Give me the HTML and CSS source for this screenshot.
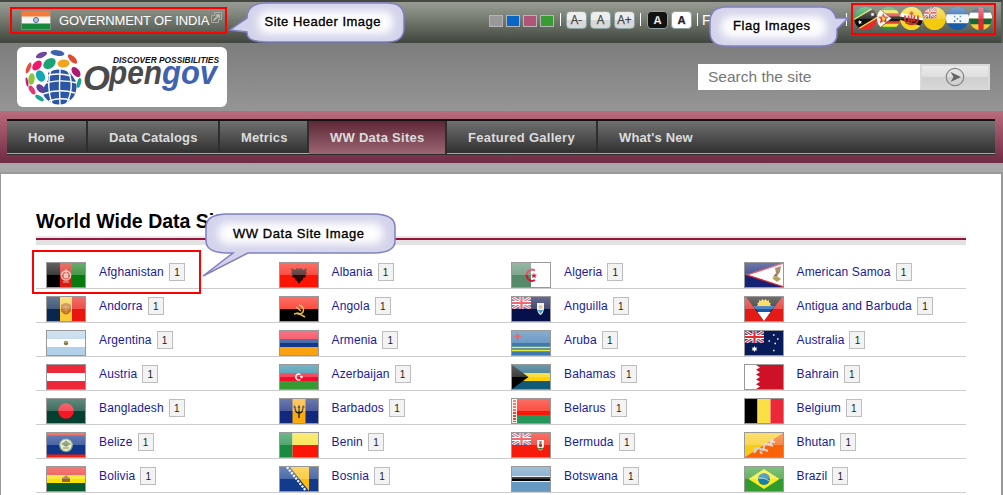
FILE: index.html
```html
<!DOCTYPE html>
<html lang="en">
<head>
<meta charset="utf-8">
<title>World Wide Data Sites</title>
<link rel="stylesheet" href="styles.css">
</head>
<body>
<svg class="defs" aria-hidden="true">
  <defs>
    <symbol id="jack" viewBox="0 0 19 12" preserveAspectRatio="none">
      <rect width="19" height="12" fill="#2c4a92"/>
      <path d="M0 0L19 12M19 0L0 12" stroke="#fff" stroke-width="3"/>
      <path d="M0 0L19 12M19 0L0 12" stroke="#e22b33" stroke-width="1.200"/>
      <path d="M9.500 0V12M0 6H19" stroke="#fff" stroke-width="4"/>
      <path d="M9.500 0V12M0 6H19" stroke="#e22b33" stroke-width="2.200"/>
    </symbol>
    <clipPath id="round"><circle cx="11" cy="11" r="11"/></clipPath>
    <filter id="soft" x="-20%" y="-40%" width="140%" height="180%"><feGaussianBlur stdDeviation="4.500"/></filter>
    <linearGradient id="disc" x1="0" y1="0" x2="0" y2="1"><stop offset="0" stop-color="#fff" stop-opacity=".45"/><stop offset=".5" stop-color="#fff" stop-opacity=".15"/><stop offset=".52" stop-color="#fff" stop-opacity="0"/></linearGradient>
  </defs>
</svg>

<div class="topbar">
  <div class="owner">
    <svg class="india" viewBox="0 0 30 20"><rect width="30" height="20" fill="#f5f5f2"/><rect width="30" height="6.500" fill="#f47b3c"/><rect y="13.500" width="30" height="6.500" fill="#16883a"/><circle cx="15" cy="10" r="2.500" fill="#b9c3e4" stroke="#4e66a8" stroke-width="1"/><rect x=".5" y=".5" width="29" height="19" fill="none" stroke="#8b8f88" stroke-width=".8"/></svg>
    <span class="owner-name">GOVERNMENT OF INDIA</span>
    <svg class="ext" viewBox="0 0 11 11"><path d="M3.500.5h7v7h-3v3h-7v-7h3z" fill="none" stroke="#a6a9a3"/><path d="M2.500 8.500L7.500 3.500M4.800 3h3.400v3.400" fill="none" stroke="#c9cbc7" stroke-width="1.100"/></svg>
  </div>
  <div class="tools">
    <i class="sw gray"></i><i class="sw blue"></i><i class="sw pink"></i><i class="sw green"></i>
    <b class="bar b1"></b>
    <span class="key">A-</span><span class="key">A</span><span class="key">A+</span>
    <b class="bar b2"></b>
    <span class="key dark">A</span><span class="key light">A</span>
    <b class="bar b3"></b>
    <span class="follow">F</span>
  </div>
  <b class="bar b4"></b>
  <div class="discs">
    <svg viewBox="0 0 22 22"><g clip-path="url(#round)"><path d="M0 0H22L0 22z" fill="#159447"/><path d="M22 0V22H0z" fill="#e52a2c"/><path d="M-4 20L26 2" stroke="#f6d94a" stroke-width="11"/><path d="M-4 20L26 2" stroke="#111" stroke-width="8.500"/><path d="M5 12.500l1 1.100 1.500-.3-.8 1.300.6 1.400-1.400-.4-1.200.9.100-1.500-1.200-.9 1.400-.3zM17 5l1 1.100 1.500-.3-.8 1.300.6 1.400-1.400-.4-1.200.9.100-1.500-1.200-.9 1.400-.3z" fill="#fff"/></g><circle cx="11" cy="11" r="11" fill="url(#disc)"/></svg>
    <svg viewBox="0 0 22 22"><g clip-path="url(#round)"><rect width="22" height="22" fill="#26963d"/><rect y="3" width="22" height="16" fill="#f6dc36"/><rect y="6" width="22" height="10" fill="#e23b30"/><rect y="9" width="22" height="4.500" fill="#191512"/><path d="M-1 -1L14 11L-1 23z" fill="#f4f4f0" stroke="#222" stroke-width=".6"/><path d="M6 5.500l1.600 3.500 3.600.3-2.600 2.500 1 3.700-3.600-1.800-3.200 1.800.8-3.600-2.600-2.600 3.500-.3z" fill="#d7382b"/><path d="M5 8.500l3 2.500-1 2.500-2-.5z" fill="#f0cf32"/></g><circle cx="11" cy="11" r="11" fill="url(#disc)"/></svg>
    <svg viewBox="0 0 22 22"><g clip-path="url(#round)"><rect width="22" height="22" fill="#f7d51e"/><path d="M-1 5L23 11V18L-1 11z" fill="#fff"/><path d="M-1 9L23 13V19L-1 12z" fill="#161310"/><path d="M5 8Q4 12 6 15Q11 18 16 15Q18 12 17 8M8 8L9 14M14 8L13 14M11 4V17M7 13H15M9 6H13" fill="none" stroke="#cf251f" stroke-width="1.700"/></g><circle cx="11" cy="11" r="11" fill="url(#disc)"/></svg>
    <svg viewBox="0 0 22 22"><g clip-path="url(#round)"><rect width="22" height="22" fill="#f3ca10"/><use href="#jack" x="0" y="0" width="13" height="11"/><circle cx="6.500" cy="5.500" r="1.100" fill="#f5d936"/></g><circle cx="11" cy="11" r="11" fill="url(#disc)"/></svg>
    <svg viewBox="0 0 22 22"><g clip-path="url(#round)"><rect width="22" height="22" fill="#1b5ca8"/><rect y="7" width="22" height="8.500" fill="#f4f7fa"/><path d="M7.500 9h1.500M13 9h1.500M10.300 11.300h1.500M7.500 13.500h1.500M13 13.500h1.500" stroke="#3f79bc" stroke-width="1.500"/></g><circle cx="11" cy="11" r="11" fill="url(#disc)"/></svg>
    <svg viewBox="0 0 22 22"><g clip-path="url(#round)"><rect width="22" height="22" fill="#f3cd32"/><rect width="22" height="5.500" fill="#123a6d"/><rect y="5.500" width="22" height="5.500" fill="#fff"/><rect y="11" width="22" height="5.500" fill="#15653a"/><rect x="9" width="5" height="22" fill="#dd2636"/></g><circle cx="11" cy="11" r="11" fill="url(#disc)"/></svg>
  </div>
</div>

<header class="masthead">
  <svg class="logo" viewBox="0 0 210 60">
    <g>
      <circle cx="42" cy="40" r="17.500" fill="#2d55a5"/>
      <path d="M24 38Q40 31 60 36M26 47Q42 41 58 46M32 54Q43 50 53 53M29 29Q40 25 54 29M34 22Q29 38 35 57M43 22Q42 39 43 58M51 24Q58 38 50 56" fill="none" stroke="#fff" stroke-width="1.400"/>
      <path d="M20 20h11v13l-9 16z" fill="#fff"/>
      <ellipse cx="24.500" cy="8" rx="6" ry="2.600" transform="rotate(-22 24.500 8)" fill="#70489b"/>
      <ellipse cx="40.500" cy="6" rx="7" ry="2.900" transform="rotate(8 40.500 6)" fill="#3f62ad"/>
      <ellipse cx="55.500" cy="12" rx="6" ry="2.700" transform="rotate(45 55.500 12)" fill="#df4a31"/>
      <ellipse cx="20" cy="18.500" rx="5.800" ry="3.800" transform="rotate(-48 20 18.500)" fill="#ee176b"/>
      <ellipse cx="32.500" cy="16.500" rx="6.800" ry="4.800" transform="rotate(-35 32.500 16.500)" fill="#1da276"/>
      <ellipse cx="46.500" cy="16.500" rx="6" ry="4" transform="rotate(-5 46.500 16.500)" fill="#efa51d"/>
      <ellipse cx="11.500" cy="21" rx="5.800" ry="2" transform="rotate(-68 11.500 21)" fill="#e94942"/>
      <ellipse cx="14.500" cy="32" rx="5.800" ry="3.200" transform="rotate(-82 14.500 32)" fill="#8bc53f"/>
      <ellipse cx="23.500" cy="29" rx="6" ry="4.200" transform="rotate(62 23.500 29)" fill="#12a9b5"/>
      <ellipse cx="59" cy="25" rx="5.800" ry="3.400" transform="rotate(50 59 25)" fill="#ad1971"/>
      <ellipse cx="62" cy="36" rx="5" ry="1.900" transform="rotate(-75 62 36)" fill="#13a58e"/>
      <ellipse cx="10" cy="35" rx="4.500" ry="1.200" transform="rotate(80 10 35)" fill="#c2197c"/>
      <ellipse cx="15" cy="43" rx="5" ry="2.500" transform="rotate(58 15 43)" fill="#e83579"/>
      <ellipse cx="23.500" cy="41.500" rx="5" ry="3.300" transform="rotate(48 23.500 41.500)" fill="#673e96"/>
      <ellipse cx="22.500" cy="51" rx="5" ry="2.100" transform="rotate(35 22.500 51)" fill="#19a693"/>
    </g>
    <text class="lg-tag" x="96" y="16" textLength="106" lengthAdjust="spacingAndGlyphs">DISCOVER POSSIBILITIES</text>
    <text class="lg-o" x="66" y="43" textLength="27" lengthAdjust="spacingAndGlyphs">O</text>
    <text class="lg-pen" x="92" y="37" textLength="53" lengthAdjust="spacingAndGlyphs">pen</text>
    <text class="lg-gov" x="145" y="37" textLength="55" lengthAdjust="spacingAndGlyphs">gov</text>
  </svg>
  <div class="search">
    <div class="field">Search the site</div>
    <div class="go"><svg viewBox="0 0 20 20"><circle cx="10" cy="10" r="8.700" fill="none" stroke="#868686" stroke-width="1.200"/><path d="M5.500 5L16 10L5.500 15L8.500 10z" fill="#666"/></svg></div>
  </div>
</header>

<nav class="nav">
  <div class="tabs">
    <a class="t1">Home</a><a class="t2">Data Catalogs</a><a class="t3">Metrics</a><a class="t4 on">WW Data Sites</a><a class="t5">Featured Gallery</a><a class="t6">What's New</a>
  </div>
</nav>

<main class="page">
  <h1>World Wide Data Sites</h1>
  <div class="rule"></div>
  <div class="sites">
    <div class="site"><span class="flag gloss"><svg viewBox="0 0 38 24"><path d="M0 0h13v24H0z" fill="#000"/><path d="M13 0h12v24H13z" fill="#d91c12"/><path d="M25 0h13v24H25z" fill="#087a10"/><circle cx="19" cy="12.500" r="4.500" fill="none" stroke="#eec1b9" stroke-width="1.600"/><path d="M17 11h4v4h-4zM16 19h6M19 6v5" fill="#eec1b9" stroke="#eec1b9"/></svg></span><a>Afghanistan</a><em>1</em></div>
    <div class="site"><span class="flag gloss"><svg viewBox="0 0 38 24"><path d="M0 0h38v24H0z" fill="#fa1505"/><path d="M11 5l4 2 2-2 2 1 2-1 2 2 4-2-1 4 1 2-2 1 1 2-3 1v2l-2 1-2 3-2-3-2-1v-2l-3-1 1-2-2-1 1-2z" fill="#2d0805"/></svg></span><a>Albania</a><em>1</em></div>
    <div class="site"><span class="flag gloss"><svg viewBox="0 0 38 24"><path d="M0 0h19v24H0z" fill="#578a6b"/><path d="M19 0h19v24H19z" fill="#fff"/><path d="M23 7.500A5.500 5.500 0 1 0 23 17" fill="none" stroke="#d71536" stroke-width="2"/><path d="M22 9.500l.8 2 2.200.1-1.600 1.400.6 2.100-2-1.200-2 1.200.6-2.100-1.600-1.400 2.200-.1z" fill="#d71536"/></svg></span><a>Algeria</a><em>1</em></div>
    <div class="site"><span class="flag gloss"><svg viewBox="0 0 38 24"><path d="M0 0h38v24H0z" fill="#142374"/><path d="M39 0L2 12L39 24z" fill="#fff" stroke="#df2734" stroke-width="1.300"/><path d="M30 5l6-2-1 6-3 4-4 1 3-4z" fill="#8b5d38"/><path d="M27 15l5-2 4 3-4 3z" fill="#b3a45a"/></svg></span><a>American Samoa</a><em>1</em></div>

    <div class="site"><span class="flag gloss"><svg viewBox="0 0 38 24"><path d="M0 0h13v24H0z" fill="#08264f"/><path d="M13 0h12v24H13z" fill="#f8cb37"/><path d="M25 0h13v24H25z" fill="#e8160e"/><path d="M14 8q5-4 10 0v6q-5 7-10 0z" fill="#bf7027"/><path d="M16 10h6M19 8v8M16 13h6" stroke="#dfa044"/></svg></span><a>Andorra</a><em>1</em></div>
    <div class="site"><span class="flag gloss"><svg viewBox="0 0 38 24"><path d="M0 0h38v12H0z" fill="#fa1505"/><path d="M0 12h38v12H0z" fill="#000"/><path d="M19 8q6 2 4 7-3 4-7 1M14 17l4-1 7 4M16 10l5 4" fill="none" stroke="#eabd36" stroke-width="1.500"/></svg></span><a>Angola</a><em>1</em></div>
    <div class="site"><span class="flag gloss"><svg viewBox="0 0 38 24"><path d="M0 0h38v24H0z" fill="#071149"/><use href="#jack" width="19" height="12"/><path d="M25 6h7v6q-1 5-3.500 6Q26 17 25 12z" fill="#f2efe5"/><path d="M25.500 13h6l-3 4z" fill="#4d9bc9"/><circle cx="28.500" cy="10" r="2" fill="#e5b366"/></svg></span><a>Anguilla</a><em>1</em></div>
    <div class="site"><span class="flag gloss"><svg viewBox="0 0 38 24"><path d="M0 0h38v24H0z" fill="#e41a17"/><path d="M1 0h36L19 24z" fill="#151515"/><path d="M8 9h22l-5 6H13z" fill="#165ba9"/><path d="M12.500 15h13L19 24z" fill="#fff"/><path d="M12 9l1-2-1-1 2-.5V3l2 1 1-2 2 1.500L21 2l1 2 2-1v2.500l2 .5-1 1 1 2z" fill="#f5d02b"/></svg></span><a>Antigua and Barbuda</a><em>1</em></div>

    <div class="site"><span class="flag gloss"><svg viewBox="0 0 38 24"><path d="M0 0h38v24H0z" fill="#b2d1e8"/><path d="M0 8h38v8H0z" fill="#fff"/><circle cx="19" cy="12" r="2.300" fill="#8b7444"/></svg></span><a>Argentina</a><em>1</em></div>
    <div class="site"><span class="flag gloss"><svg viewBox="0 0 38 24"><path d="M0 0h38v8H0z" fill="#f42037"/><path d="M0 8h38v8H0z" fill="#10398b"/><path d="M0 16h38v8H0z" fill="#fca210"/></svg></span><a>Armenia</a><em>1</em></div>
    <div class="site"><span class="flag gloss"><svg viewBox="0 0 38 24"><path d="M0 0h38v24H0z" fill="#3e7ab2"/><path d="M0 16.500h38M0 19.500h38" stroke="#e9ed37" stroke-width="1.300"/><path d="M5.500 1l1.200 3 3.300 1.300-3.300 1.200-1.200 3.500-1.200-3.500L1 5.300 4.300 4z" fill="#e0201c"/></svg></span><a>Aruba</a><em>1</em></div>
    <div class="site"><span class="flag"><svg viewBox="0 0 38 24"><path d="M0 0h38v24H0z" fill="#071b59"/><use href="#jack" width="19" height="12"/><path d="M9.500 15l.9 1.700 2-.2-1.200 1.500 1.200 1.500-2-.2-.9 1.700-.9-1.700-2 .2L7.800 18l-1.200-1.500 2 .2z" fill="#fff"/><path d="M28 4h1.500M23.500 10H25M32 8h1.500M29.500 12.500H31M28 19.500h1.500" stroke="#fff" stroke-width="1.600"/></svg></span><a>Australia</a><em>1</em></div>

    <div class="site"><span class="flag"><svg viewBox="0 0 38 24"><path d="M0 0h38v24H0z" fill="#ed2939"/><path d="M0 8h38v8H0z" fill="#fff"/></svg></span><a>Austria</a><em>1</em></div>
    <div class="site"><span class="flag gloss"><svg viewBox="0 0 38 24"><path d="M0 0h38v8H0z" fill="#2286a0"/><path d="M0 8h38v8H0z" fill="#f20d2a"/><path d="M0 16h38v8H0z" fill="#369b32"/><path d="M20.500 9.500a3 3 0 1 0 0 5" fill="none" stroke="#fff" stroke-width="1.400"/><circle cx="21.500" cy="12" r="1.300" fill="#fff"/></svg></span><a>Azerbaijan</a><em>1</em></div>
    <div class="site"><span class="flag gloss"><svg viewBox="0 0 38 24"><path d="M0 0h38v24H0z" fill="#105977"/><path d="M0 8h38v8H0z" fill="#fbd304"/><path d="M0 0L16.500 12L0 24z" fill="#000"/></svg></span><a>Bahamas</a><em>1</em></div>
    <div class="site"><span class="flag"><svg viewBox="0 0 38 24"><path d="M0 0h38v24H0z" fill="#ce1126"/><path d="M0 0h11l4 2.400-4 2.400 4 2.400-4 2.400 4 2.400-4 2.400 4 2.400-4 2.400 4 2.400-4 2.400H0z" fill="#fff"/></svg></span><a>Bahrain</a><em>1</em></div>

    <div class="site"><span class="flag gloss"><svg viewBox="0 0 38 24"><path d="M0 0h38v24H0z" fill="#03402f"/><circle cx="19" cy="12" r="7.800" fill="#f51725"/></svg></span><a>Bangladesh</a><em>1</em></div>
    <div class="site"><span class="flag gloss"><svg viewBox="0 0 38 24"><path d="M0 0h38v24H0z" fill="#11287d"/><path d="M12.500 0h13v24h-13z" fill="#fba90d"/><path d="M19 7v12M15 8q0 6 4 6t4-6" fill="none" stroke="#1d1810" stroke-width="1.300"/><path d="M17.500 9L19 5.500L20.500 9zM13.500 9l.5-3 2 2zM24.500 9L24 6l-2 2z" fill="#1d1810"/></svg></span><a>Barbados</a><em>1</em></div>
    <div class="site"><span class="flag gloss"><svg viewBox="0 0 38 24"><path d="M0 0h38v16H0z" fill="#fa1706"/><path d="M0 16h38v8H0z" fill="#26975b"/><path d="M0 0h5v24H0z" fill="#f4eee8"/><path d="M2.500 1v22" stroke="#dc4a43" stroke-width="3" stroke-dasharray="2 1"/></svg></span><a>Belarus</a><em>1</em></div>
    <div class="site"><span class="flag"><svg viewBox="0 0 38 24"><path d="M0 0h12.500v24H0z" fill="#000"/><path d="M12.500 0h13v24h-13z" fill="#fae042"/><path d="M25.500 0H38v24H25.500z" fill="#ed2939"/></svg></span><a>Belgium</a><em>1</em></div>

    <div class="site"><span class="flag gloss"><svg viewBox="0 0 38 24"><path d="M0 0h38v24H0z" fill="#f51f0d"/><path d="M0 2.500h38v19H0z" fill="#10358a"/><circle cx="19" cy="12.300" r="6.300" fill="#e9efd6" stroke="#78a275" stroke-width="1.200"/><path d="M15 11l4-3 4 3-4 2zM16 15h6" fill="#4b9457" stroke="#9c8650" stroke-width="1.200"/></svg></span><a>Belize</a><em>1</em></div>
    <div class="site"><span class="flag gloss"><svg viewBox="0 0 38 24"><path d="M0 0h12.500v24H0z" fill="#188b42"/><path d="M12.500 0H38v12H12.500z" fill="#f7df2a"/><path d="M12.500 12H38v12H12.500z" fill="#fa1705"/></svg></span><a>Benin</a><em>1</em></div>
    <div class="site"><span class="flag gloss"><svg viewBox="0 0 38 24"><path d="M0 0h38v24H0z" fill="#f61b0b"/><use href="#jack" width="19" height="12"/><path d="M25 7h7v6q-1 4-3.500 4.500Q26 17 25 13z" fill="#f5f0e7"/><path d="M28.500 8v6M27 12h3" stroke="#893326" stroke-width="2"/><path d="M25 15h7l-3.500 2z" fill="#427a40"/></svg></span><a>Bermuda</a><em>1</em></div>
    <div class="site"><span class="flag gloss"><svg viewBox="0 0 38 24"><path d="M0 0h38L0 24z" fill="#f9ca16"/><path d="M38 0v24H0z" fill="#fa6207"/><path d="M9 20l4-5 5 2 2-6 5 1 3-6M12 17l-3-1M18 16l5 2M23 11l5 2M15 18l2 3M25 8l5 1" fill="none" stroke="#d9d2cc" stroke-width="2"/></svg></span><a>Bhutan</a><em>1</em></div>

    <div class="site"><span class="flag gloss"><svg viewBox="0 0 38 24"><path d="M0 0h38v8H0z" fill="#ec2b26"/><path d="M0 8h38v8H0z" fill="#f8e300"/><path d="M0 16h38v8H0z" fill="#07592d"/><path d="M15 11l2-1 2-2 2 2 2 1v4h-8z" fill="#9b622c"/></svg></span><a>Bolivia</a><em>1</em></div>
    <div class="site"><span class="flag gloss"><svg viewBox="0 0 38 24"><path d="M0 0h38v24H0z" fill="#123b8e"/><path d="M10 0h19v24z" fill="#fcbd0b"/><path d="M7 0L26 24" stroke="#f5f8fb" stroke-width="2.300" stroke-dasharray="2.200 1.200"/></svg></span><a>Bosnia</a><em>1</em></div>
    <div class="site"><span class="flag gloss"><svg viewBox="0 0 38 24"><path d="M0 0h38v24H0z" fill="#6699c1"/><path d="M0 9h38v6H0z" fill="#e6eef5"/><path d="M0 10h38v4H0z" fill="#000"/></svg></span><a>Botswana</a><em>1</em></div>
    <div class="site"><span class="flag gloss"><svg viewBox="0 0 38 24"><path d="M0 0h38v24H0z" fill="#319b2e"/><path d="M19 2L34.500 12L19 22L3.500 12z" fill="#f7ec1c"/><circle cx="19" cy="12" r="6" fill="#1680a9"/><path d="M13.500 11q6-1 11 3" fill="none" stroke="#a9cfcd"/></svg></span><a>Brazil</a><em>1</em></div>
  </div>
</main>

<div class="mark m1"></div>
<div class="mark m2"></div>
<div class="mark m3"></div>

<svg class="callout c1" viewBox="0 0 180 46">
  <path class="bub" d="M37 3H158Q175 3 175 17V28Q175 42 158 42H37Q18 42 18 33V32L1 30L18 18Q18 3 37 3z"/>
  <rect x="29" y="11" width="135" height="23" rx="9" fill="#fff" filter="url(#soft)"/>
  <text x="35.500" y="26" textLength="116">Site Header Image</text>
</svg>
<svg class="callout c2" viewBox="0 0 145 46">
  <path class="bub" d="M17 2H113Q124 2 127 13L139 13L128 24V29Q128 41 113 41H17Q1 41 1 27V17Q1 2 17 2z"/>
  <rect x="12" y="11" width="105" height="22" rx="9" fill="#fff" filter="url(#soft)"/>
  <text x="24" y="25" textLength="77">Flag Images</text>
</svg>
<svg class="callout c3" viewBox="0 0 200 68">
  <path class="bub" d="M24 2H175Q194 3 194 15V29Q194 40 175 41H47L2 64L32 41H24Q5 40 5 29V15Q5 3 24 2z"/>
  <rect x="17" y="11" width="165" height="21" rx="9" fill="#fff" filter="url(#soft)"/>
  <text x="32" y="26" textLength="131">WW Data Site Image</text>
</svg>
</body>
</html>
```
FILE: styles.css
```css
* { box-sizing: border-box; }
html, body { margin: 0; height: 100%; overflow: hidden; }
body {
  position: relative;
  width: 1003px;
  height: 495px;
  display: flex;
  flex-direction: column;
  background: #a8a8a8;
  font-family: "Liberation Sans", Arial, sans-serif;
}
svg { display: block; }
.defs { position: absolute; width: 0; height: 0; }

.topbar {
  flex: none;
  display: flex;
  align-items: flex-start;
  height: 43px;
  padding-left: 21px;
  border-top: 2px solid #434840;
  border-right: 2px solid #5a5e57;
  background: linear-gradient(#989b94, #858a80 25%, #434840 97%);
}
.owner { display: flex; width: 468px; padding-top: 8px; }
.india { width: 30px; height: 20px; }
.owner-name { width: 151px; margin-left: 8px; font-size: 13px; line-height: 21px; letter-spacing: -.14px; color: #fff; white-space: nowrap; }
.ext { width: 11px; height: 11px; margin: 2px 0 0 1px; }
.tools { display: flex; align-items: flex-start; width: 357px; }
.sw { flex: none; width: 14px; height: 12px; margin: 13px 3px 0 0; border: 1px solid #b5b5b5; }
.gray { background: #999; }
.blue { background: #0866c6; }
.pink { background: #b05577; }
.green { background: #389c32; }
.bar { flex: none; width: 1px; height: 13px; margin-top: 11px; background: #fff; }
.b1 { margin-left: 3px; margin-right: 5px; }
.b2 { margin-left: 2px; margin-right: 6px; }
.b3 { margin-left: 2px; margin-right: 4px; }
.b4 { margin-right: 7px; }
.key {
  flex: none;
  width: 21px;
  height: 18px;
  margin: 9px 3px 0 0;
  border: 1px solid #8da3a3;
  border-radius: 4px;
  background: linear-gradient(#ededed 50%, #d8d8d8 50%);
  color: #444;
  font: 12px/16px "Open Sans", sans-serif;
  text-align: center;
  -webkit-text-stroke: .25px #444;
}
.key.dark { background: #111; color: #fff; font-weight: bold; font-size: 11px; }
.key.light { background: #fff; color: #222; font-weight: bold; font-size: 11px; }
.follow { padding-top: 10px; font-size: 14px; line-height: 16px; color: #fff; }
.discs { display: flex; padding-top: 5px; }
.discs svg { width: 23px; height: 23px; }

.masthead {
  flex: none;
  display: flex;
  justify-content: space-between;
  align-items: flex-start;
  height: 68px;
  padding: 4px 13px 0 17px;
  background: linear-gradient(#7d7d7d, #959595);
}
.logo { width: 210px; height: 60px; border-radius: 6px; background: #fff; }
.lg-tag { font: italic bold 8.500px "Liberation Sans", sans-serif; fill: #111; }
.lg-o { font: italic bold 35px "Liberation Sans", sans-serif; fill: #4a4a4d; }
.lg-pen { font: italic bold 34px "Liberation Sans", sans-serif; fill: #4a4a4d; }
.lg-gov { font: italic bold 34px "Liberation Sans", sans-serif; fill: #4063b0; }
.search { display: flex; width: 292px; height: 26px; margin-top: 17px; }
.field { width: 222px; padding-left: 10px; background: #fff; color: #777; font-size: 15.500px; line-height: 26px; }
.go {
  flex: 1;
  display: flex;
  justify-content: center;
  align-items: center;
  border: 2px solid #d9d9d9;
  background: linear-gradient(#ebebeb, #dedede 48%, #cfcfcf 50%, #d6d6d6);
}
.go svg { width: 20px; height: 20px; }

.nav { flex: none; height: 52px; padding: 8px 8px 0 7px; background: linear-gradient(#bb6d7c, #b06475 12%, #702c46 98%); }
.tabs {
  display: flex;
  height: 36px;
  border-top: 2px solid #111;
  border-bottom: 1px solid #2d2d2d;
  background: linear-gradient(#707070, #303030 32px, #aaa 32px);
}
.tabs a {
  height: 32px;
  padding-left: 21px;
  border-right: 2px solid #2e2e2e;
  color: #dcdcdc;
  font-size: 13px;
  font-weight: bold;
  line-height: 33px;
  letter-spacing: .14px;
  white-space: nowrap;
}
.t1 { width: 81px; }
.t2 { width: 132px; }
.t3 { width: 89px; }
.t4 { width: 138px; }
.t5 { width: 151px; }
.tabs .t4, .tabs .t5 { letter-spacing: .27px; }
.tabs .t6 { border-right: 0; }
.tabs .on { height: 33px; background: linear-gradient(#5e2735, #9c6674) padding-box; }

.page {
  flex: 1;
  margin-top: 9px;
  padding: 33px 35px 0;
  border: solid #999;
  border-width: 2px 2px 0 1px;
  background: #fff;
}
h1 { margin: 0; height: 29px; font-size: 19.500px; line-height: 28px; color: #000; }
.rule { height: 9px; border-top: 2px solid #e8e8e8; background: linear-gradient(#97153c 2px, #e2e2e2 2px); }
.sites { display: grid; grid-template-columns: repeat(4, 1fr); width: 930px; margin-top: 10px; }
.site { display: flex; align-items: flex-start; height: 34px; padding: 7px 0 0 10px; border-bottom: 1px solid #ccc; }
.flag { position: relative; flex: none; width: 40px; height: 26px; border: 1px solid #999; }
.flag svg { width: 38px; height: 24px; }
.gloss::after { content: ""; position: absolute; inset: 0 0 12px; background: linear-gradient(rgba(255,255,255,.38), rgba(255,255,255,.24)); }
.site a { margin-left: 13px; font-size: 12px; line-height: 20px; letter-spacing: .14px; color: #1a1a9c; white-space: nowrap; }
.site em {
  width: 16px;
  height: 18px;
  margin: 1px 0 0 5px;
  border: 1px solid #bdbdbd;
  background: #f3f3f3;
  color: #222;
  font: 10px/17px "Liberation Sans", sans-serif;
  text-align: center;
}

.mark { position: absolute; border: 2px solid #f00; }
.m1 { left: 10px; top: 7px; width: 217px; height: 27px; }
.m2 { left: 851px; top: 3px; width: 145px; height: 32px; }
.m3 { left: 32px; top: 250px; width: 169px; height: 44px; }
.callout { position: absolute; }
.c1 { left: 229px; top: 0; width: 180px; height: 46px; }
.c2 { left: 709px; top: 5px; width: 145px; height: 46px; }
.c3 { left: 201px; top: 212px; width: 200px; height: 68px; }
.bub { fill: #d3d3eb; stroke: #8080c4; stroke-width: 1.500; }
.callout text { font: 13px "Liberation Sans", sans-serif; fill: #000; stroke: #000; stroke-width: .35; }
```
